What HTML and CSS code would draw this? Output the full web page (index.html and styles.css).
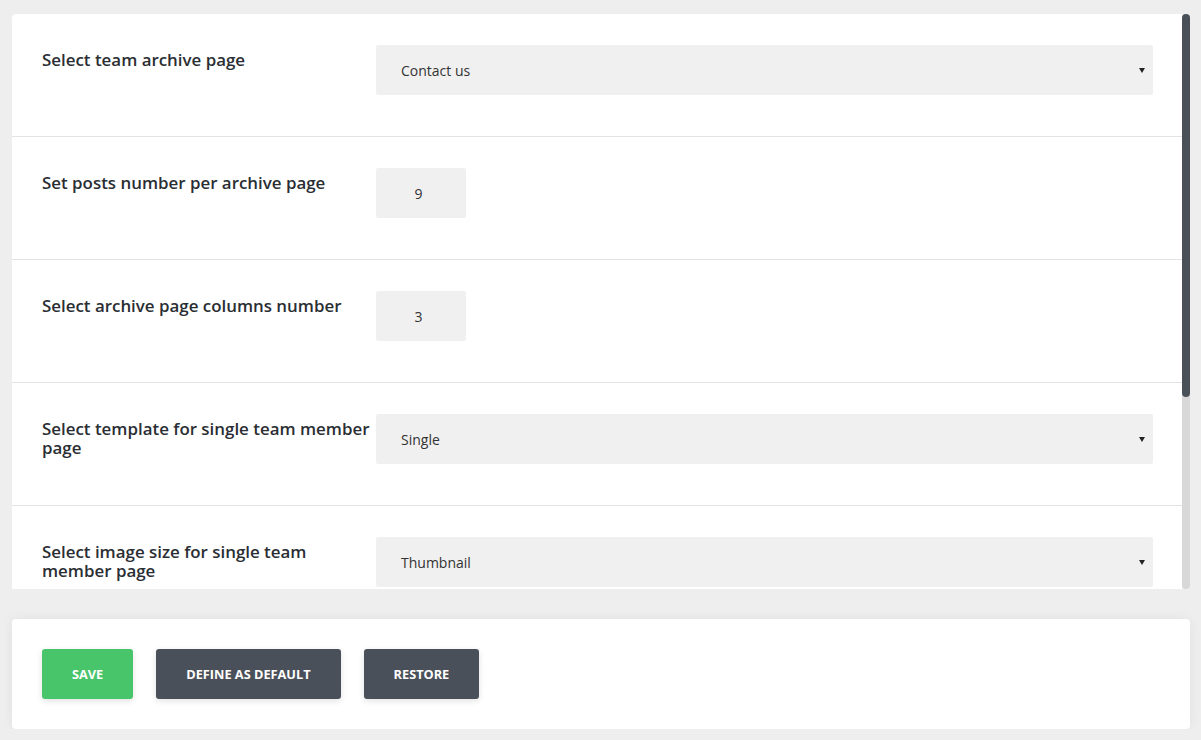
FILE: index.html
```html
<!DOCTYPE html>
<html lang="en">
<head>
<meta charset="utf-8">
<title>Team settings</title>
<link rel="stylesheet" href="styles.css">
</head>
<body>
<div class="page">
  <div class="panel settings">
    <div class="scroll-area">
      <div class="row">
        <div class="label">Select team archive page</div>
        <div class="field"><div class="select"><span>Contact us</span></div></div>
      </div>
      <div class="row">
        <div class="label">Set posts number per archive page</div>
        <div class="field"><div class="number">9</div></div>
      </div>
      <div class="row">
        <div class="label">Select archive page columns number</div>
        <div class="field"><div class="number">3</div></div>
      </div>
      <div class="row">
        <div class="label">Select template for single team member page</div>
        <div class="field"><div class="select"><span>Single</span></div></div>
      </div>
      <div class="row">
        <div class="label">Select image size for single team member page</div>
        <div class="field"><div class="select"><span>Thumbnail</span></div></div>
      </div>
      <div class="row">
        <div class="label">Select image size for archive page</div>
        <div class="field"><div class="select"><span>Medium</span></div></div>
      </div>
      <div class="row">
        <div class="label">Show social links</div>
        <div class="field"><div class="select"><span>Yes</span></div></div>
      </div>
    </div>
    <div class="scrollbar"><div class="thumb"></div></div>
  </div>
  <div class="panel actions">
    <button class="btn btn-green">Save</button>
    <button class="btn btn-dark">Define as default</button>
    <button class="btn btn-dark">Restore</button>
  </div>
</div>
</body>
</html>
```
FILE: styles.css
```css
html, body {
  margin: 0;
  padding: 0;
  background: #eeeeee;
  font-family: "Open Sans", "Liberation Sans", sans-serif;
}
.page {
  padding: 14px 11px 0 12px;
  display: flex;
  flex-direction: column;
  gap: 30px;
}
.panel {
  background: #ffffff;
  border-radius: 4px;
  width: 1178px;
  box-sizing: border-box;
}
.settings {
  height: 575px;
  display: flex;
  overflow: hidden;
  border-radius: 4px 0 0 0;
  background: transparent;
}
.scroll-area {
  flex: 1;
  overflow: hidden;
  background: #ffffff;
  border-radius: 4px 0 0 0;
}
.scrollbar {
  width: 8px;
  flex: none;
  background: #d8d8d8;
  border-radius: 4px;
}
.thumb {
  height: 383px;
  background: #4a5058;
  border-radius: 4px;
}
.row {
  display: flex;
  align-items: flex-start;
  height: 123px;
  box-sizing: border-box;
  padding: 31px 29px 0 30px;
  border-bottom: 1px solid #e3e3e3;
}
.label {
  width: 334px;
  flex: none;
  padding-top: 6px;
  font-size: 16.9px;
  font-weight: 600;
  line-height: 18.5px;
  color: #2a2e33;
}
.field {
  flex: 1;
}
.select {
  position: relative;
  height: 50px;
  background: #f0f0f0;
  border-radius: 2px;
  display: flex;
  align-items: center;
  padding-left: 25px;
  font-size: 14px;
  color: #333;
}
.select::after {
  content: "";
  position: absolute;
  right: 8px;
  top: 23px;
  border-left: 3px solid transparent;
  border-right: 3px solid transparent;
  border-top: 5px solid #222;
}
.number {
  width: 90px;
  height: 50px;
  box-sizing: border-box;
  padding-right: 5px;
  background: #f0f0f0;
  border-radius: 2px;
  display: flex;
  align-items: center;
  justify-content: center;
  font-size: 14px;
  color: #333;
}
.actions {
  height: 110px;
  padding: 30px;
  display: flex;
  gap: 23px;
  box-shadow: 0 0 12px rgba(0, 0, 0, 0.06);
}
.btn {
  height: 50px;
  padding: 0 30px;
  border: none;
  border-radius: 3px;
  font-family: "Open Sans", "Liberation Sans", sans-serif;
  font-size: 12.75px;
  font-weight: 700;
  text-transform: uppercase;
  color: #ffffff;
  box-shadow: 0 2px 6px rgba(0, 0, 0, 0.12);
}
.btn-green {
  background: #48c56a;
}
.btn-dark {
  background: #4a5059;
}
```
